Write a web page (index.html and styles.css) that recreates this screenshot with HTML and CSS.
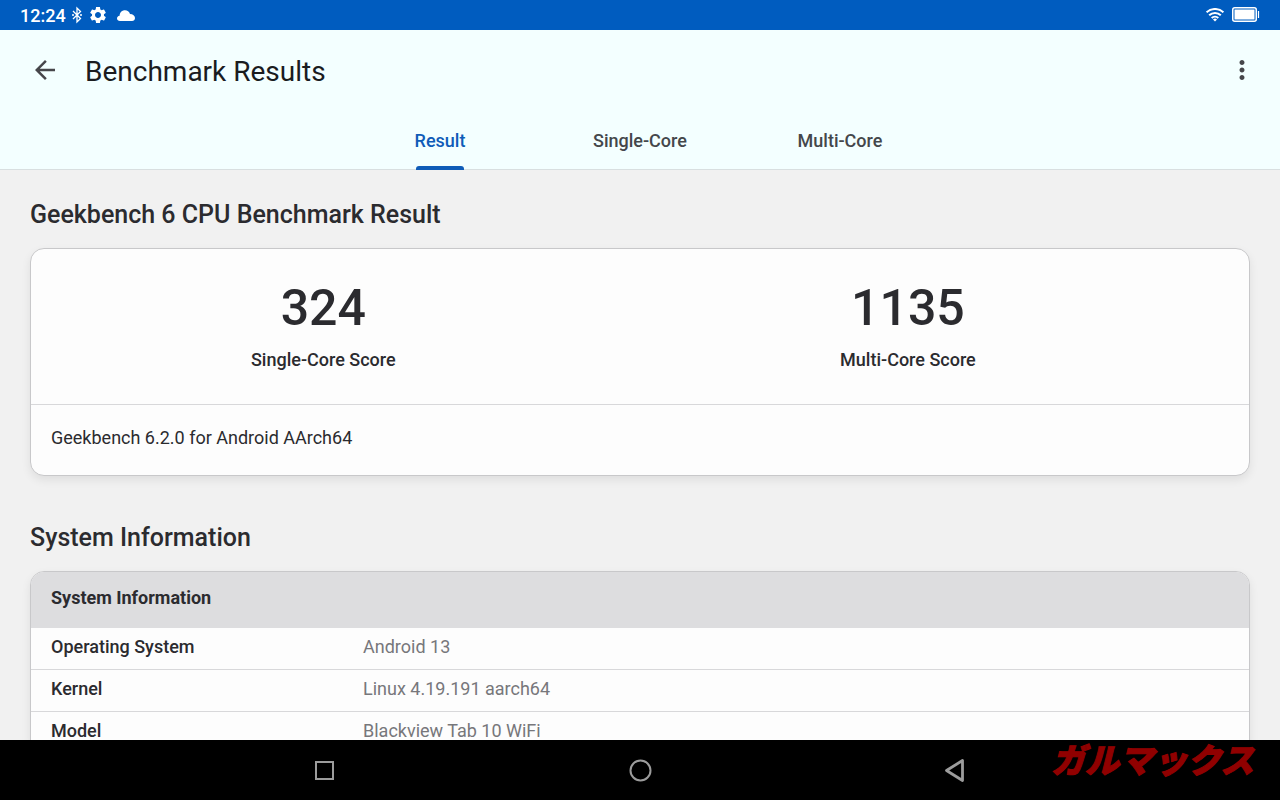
FILE: index.html
```html
<!DOCTYPE html>
<html lang="en">

<head>
    <meta charset="UTF-8">
    <meta name="viewport" content="width=device-width, initial-scale=1">
    <title>Benchmark Results</title>
    <link rel="stylesheet" href="styles.css">
</head>

<body>
    <div class="status-bar">
        <div class="status-left">
            <span class="clock">12:24</span>
            <svg class="bluetooth" width="12" height="18" viewBox="0 0 12 18" aria-hidden="true">
                <path d="M2 5l7.500 7.500L6 16V2l3.500 3.500L2 13" fill="none" stroke="currentColor" stroke-width="1.300" />
                <circle cx="2" cy="9" r="1" fill="currentColor" />
                <circle cx="10" cy="9" r="1" fill="currentColor" />
            </svg>
            <svg class="gear" width="20" height="20" viewBox="0 0 24 24" aria-hidden="true">
                <path fill="currentColor" d="M19.140 12.940c.04-.3.06-.61.06-.94 0-.32-.02-.64-.07-.94l2.030-1.580c.18-.14.23-.41.12-.61l-1.920-3.320c-.12-.22-.37-.29-.59-.22l-2.390.96c-.5-.38-1.030-.7-1.620-.94l-.36-2.540c-.04-.24-.24-.41-.48-.41h-3.840c-.24 0-.43.17-.47.41l-.36 2.540c-.59.24-1.130.57-1.620.94l-2.390-.96c-.22-.08-.47 0-.59.22L2.740 8.870c-.12.21-.08.47.12.61l2.030 1.580c-.05.3-.09.63-.09.94s.02.64.07.94l-2.030 1.580c-.18.14-.23.41-.12.61l1.920 3.320c.12.22.37.29.59.22l2.390-.96c.5.38 1.030.7 1.620.94l.36 2.540c.05.24.24.41.48.41h3.840c.24 0 .44-.17.47-.41l.36-2.540c.59-.24 1.130-.56 1.620-.94l2.390.96c.22.08.47 0 .59-.22l1.920-3.320c.12-.22.07-.47-.12-.61l-2.010-1.580zM12 15.600c-1.980 0-3.600-1.620-3.600-3.600s1.620-3.600 3.600-3.600 3.600 1.620 3.600 3.600-1.620 3.600-3.600 3.600z" />
            </svg>
            <svg class="cloud" width="18" height="11" viewBox="0 0 18 11" aria-hidden="true">
                <path fill="currentColor" d="M3 11C1.300 11 0 9.900 0 8.500 0 7 1 6 2.600 5.700 2.700 2.500 5 .3 8 .3c2.400 0 4.200 1.300 5 3.700 2.900.1 5 1.700 5 4 0 1.800-1.300 3-3 3z" />
            </svg>
        </div>
        <div class="status-right">
            <svg width="18" height="14" viewBox="0 0 18 14" aria-hidden="true">
                <g fill="none" stroke="currentColor" stroke-width="2">
                    <path d="M.6 4.400a12 12 0 0 1 16.800 0" />
                    <path d="M3.200 7.300a8.200 8.200 0 0 1 11.600 0" />
                    <path d="M5.700 10a4.700 4.700 0 0 1 6.600 0" />
                </g>
                <path d="M7 11.500a2.800 2.800 0 0 1 4 0L9 13.500z" fill="currentColor" />
            </svg>
            <svg width="28" height="16" viewBox="0 0 28 16" aria-hidden="true">
                <rect x=".75" y=".75" width="23.500" height="13.500" rx="2" fill="none" stroke="currentColor" stroke-width="1.500" />
                <rect x="2.500" y="2.500" width="20" height="10" fill="currentColor" />
                <path d="M26.500 4v7" stroke="currentColor" stroke-width="1.200" />
            </svg>
        </div>
    </div>

    <header class="app-bar">
        <div class="title-row">
            <button class="icon-button" type="button" aria-label="Back">
                <svg width="30" height="30" viewBox="0 0 24 24" aria-hidden="true">
                    <path fill="currentColor" d="M20 11H7.830l5.590-5.590L12 4l-8 8 8 8 1.410-1.410L7.830 13H20v-2z" />
                </svg>
            </button>
            <h1>Benchmark Results</h1>
            <button class="icon-button" type="button" aria-label="More options">
                <svg width="30" height="30" viewBox="0 0 24 24" aria-hidden="true">
                    <path fill="currentColor" d="M12 8c1.100 0 2-.9 2-2s-.9-2-2-2-2 .9-2 2 .9 2 2 2zm0 2c-1.100 0-2 .9-2 2s.9 2 2 2 2-.9 2-2-.9-2-2-2zm0 6c-1.100 0-2 .9-2 2s.9 2 2 2 2-.9 2-2-.9-2-2-2z" />
                </svg>
            </button>
        </div>
        <nav class="tabs">
            <button class="tab active" type="button">Result</button>
            <button class="tab" type="button">Single-Core</button>
            <button class="tab" type="button">Multi-Core</button>
        </nav>
    </header>

    <main class="content">
        <h2>Geekbench 6 CPU Benchmark Result</h2>
        <section class="card">
            <div class="scores">
                <div class="score">
                    <div class="score-value">324</div>
                    <div class="score-label">Single-Core Score</div>
                </div>
                <div class="score">
                    <div class="score-value">1135</div>
                    <div class="score-label">Multi-Core Score</div>
                </div>
            </div>
            <p class="version">Geekbench 6.2.0 for Android AArch64</p>
        </section>

        <h2>System Information</h2>
        <section class="card">
            <table class="info">
                <thead>
                    <tr>
                        <th colspan="2">System Information</th>
                    </tr>
                </thead>
                <tbody>
                    <tr>
                        <th scope="row">Operating System</th>
                        <td>Android 13</td>
                    </tr>
                    <tr>
                        <th scope="row">Kernel</th>
                        <td>Linux 4.19.191 aarch64</td>
                    </tr>
                    <tr>
                        <th scope="row">Model</th>
                        <td>Blackview Tab 10 WiFi</td>
                    </tr>
                </tbody>
            </table>
        </section>
    </main>

    <footer class="nav-bar">
        <button class="nav-button" type="button" aria-label="Recent apps">
            <svg width="24" height="24" viewBox="0 0 24 24" aria-hidden="true">
                <rect x="4" y="3" width="17" height="17" fill="none" stroke="currentColor" stroke-width="2" />
            </svg>
        </button>
        <button class="nav-button" type="button" aria-label="Home">
            <svg width="24" height="24" viewBox="0 0 24 24" aria-hidden="true">
                <circle cx="12.500" cy="11.500" r="10" fill="none" stroke="currentColor" stroke-width="2" />
            </svg>
        </button>
        <button class="nav-button" type="button" aria-label="Back">
            <svg width="24" height="24" viewBox="0 0 24 24" aria-hidden="true">
                <path d="M2.500 11.500L18.500 1.500v20z" fill="none" stroke="currentColor" stroke-width="2.800" stroke-linejoin="round" />
            </svg>
        </button>
        <span class="watermark" lang="ja">ガルマックス</span>
    </footer>
</body>

</html>
```

FILE: styles.css
```css
* {
    box-sizing: border-box;
}

body {
    display: flex;
    flex-direction: column;
    height: 100vh;
    margin: 0;
    overflow: hidden;
    background-color: #f1f1f1;
    color: #2b2b2f;
    font-family: Roboto, sans-serif;
    font-size: 18px;
}

button {
    padding: 0;
    border: none;
    background: none;
    color: inherit;
    font: inherit;
    cursor: pointer;
}

svg {
    display: block;
}

/* status bar */
.status-bar {
    display: flex;
    flex: none;
    justify-content: space-between;
    height: 30px;
    padding: 0 20px;
    background-color: #005cbf;
    color: #fff;
}

.status-left,
.status-right {
    display: flex;
    align-items: center;
}

.status-left {
    gap: 5px;
}

.status-right {
    gap: 8px;
}

.clock {
    font-weight: 500;
}

.cloud {
    margin-left: 4px;
}

/* app bar */
.app-bar {
    flex: none;
    background-color: #f3ffff;
    border-bottom: 1px solid #d8dfe0;
}

.title-row {
    display: flex;
    align-items: center;
    height: 80px;
    padding: 0 23px 0 30px;
}

.icon-button {
    color: #46464a;
}

.app-bar h1 {
    flex: 1;
    margin: 0 0 0 25px;
    padding-top: 2px;
    color: #1a1c1f;
    font-size: 28px;
    font-weight: 400;
}

.tabs {
    display: flex;
    justify-content: center;
}

.tab {
    position: relative;
    width: 200px;
    height: 59px;
    padding-top: 2px;
    color: #44474b;
    font-weight: 500;
}

.tab.active {
    color: #0f5cb8;
}

.tab.active::after {
    content: "";
    position: absolute;
    bottom: -1px;
    left: 50%;
    width: 48px;
    height: 4px;
    margin-left: -24px;
    border-radius: 3px 3px 0 0;
    background-color: #0f5cb8;
}

/* results */
.content {
    flex: 1;
    min-height: 0;
    padding: 29px 30px 0;
    overflow: hidden;
}

.content h2 {
    margin: 0 0 17px;
    font-size: 25px;
    font-weight: 500;
    line-height: 32px;
}

.card {
    margin-bottom: 46px;
    overflow: hidden;
    border: 1px solid #c8c8ca;
    border-radius: 14px;
    background-color: #fdfdfd;
    box-shadow: 0 4px 10px rgba(0, 0, 0, 0.08);
}

.scores {
    display: flex;
    padding: 29px 0 32px;
    border-bottom: 1px solid #d8d8da;
}

.score {
    width: 48%;
    text-align: center;
}

.score-value {
    font-size: 50px;
    font-weight: 500;
    line-height: 60px;
}

.score-label {
    margin-top: 9px;
    font-weight: 500;
    line-height: 25px;
}

.version {
    margin: 0;
    padding: 20px 20px 25px;
    line-height: 25px;
}

.info {
    width: 100%;
    border-collapse: collapse;
    line-height: 25px;
}

.info th,
.info td {
    padding: 6px 20px 10px;
    text-align: left;
}

.info thead th {
    padding: 13px 20px 18px;
    background-color: #dddddf;
    font-weight: 700;
}

.info tbody th {
    width: 312px;
    font-weight: 500;
}

.info td {
    color: #77777b;
}

.info tbody tr + tr {
    border-top: 1px solid #d8d8da;
}

/* bottom navigation */
.nav-bar {
    position: relative;
    display: flex;
    flex: none;
    align-items: center;
    justify-content: center;
    gap: 292px;
    height: 60px;
    padding-top: 1px;
    background-color: #000;
    color: #9c9c9c;
}

.watermark {
    position: absolute;
    top: 0;
    right: 26px;
    color: #900000;
    font-family: "Noto Sans CJK JP", sans-serif;
    font-size: 34px;
    font-style: italic;
    font-weight: 900;
    line-height: 38px;
    -webkit-text-stroke: 1px #900000;
}
```
